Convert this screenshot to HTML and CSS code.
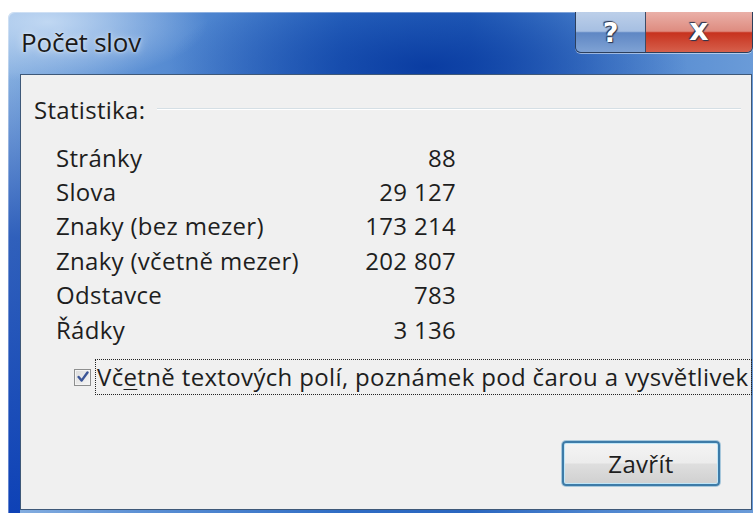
FILE: index.html
```html
<!DOCTYPE html>
<html lang="cs">
<head>
<meta charset="utf-8">
<title>Počet slov</title>
<link rel="stylesheet" href="styles.css">
</head>
<body>
<div class="window">
  <div class="titlebar">
    <div class="title">Počet slov</div>
    <div class="caption-buttons">
      <div class="cap-btn help"><span class="glyph">?</span></div>
      <div class="cap-btn close"><span class="glyph">x</span></div>
    </div>
  </div>
  <div class="client">
    <div class="group-head">
      <span class="group-label">Statistika:</span>
      <span class="group-rule"></span>
    </div>
    <div class="stats">
      <span class="label">Stránky</span><span class="value">88</span>
      <span class="label">Slova</span><span class="value">29 127</span>
      <span class="label">Znaky (bez mezer)</span><span class="value">173 214</span>
      <span class="label">Znaky (včetně mezer)</span><span class="value">202 807</span>
      <span class="label">Odstavce</span><span class="value">783</span>
      <span class="label">Řádky</span><span class="value">3 136</span>
    </div>
    <div class="check-row">
      <span class="checkbox">
        <svg viewBox="0 0 11 11" width="12" height="12"><path d="M1.5 5.5 L4.2 8.8 L9.6 1.4" fill="none" stroke="#3b5597" stroke-width="2.2" stroke-linecap="round" stroke-linejoin="round"/></svg>
      </span>
      <span class="check-label">Vč<u>e</u>tně textových polí, poznámek pod čarou a vysvětlivek</span>
    </div>
    <div class="actions">
      <button class="btn-default">Zavřít</button>
    </div>
  </div>
</div>
</body>
</html>
```
FILE: styles.css
```css
html, body {
  margin: 0;
  padding: 0;
  background: #ffffff;
}

body {
  width: 753px;
  height: 517px;
  overflow: hidden;
  font-family: "Open Sans", "Noto Sans", sans-serif;
}

/* Aero glass frame: light top-left, deep blue centre, darker left edge lower down */
.window {
  margin: 12px 0 0 8px;
  width: 745px;
  height: 501px;
  display: flex;
  flex-direction: column;
  border-radius: 6px 0 0 0;
  background:
    linear-gradient(180deg, rgba(20, 70, 175, 0) 12%, rgba(20, 70, 175, 0.75) 45%, rgba(8, 60, 180, 0.95) 100%) 0 0 / 12px 100% no-repeat,
    radial-gradient(ellipse 260px 90px at 420px 55px, rgba(8, 58, 160, 0.95), rgba(8, 58, 160, 0) 100%),
    radial-gradient(ellipse 160px 60px at 40px 10px, rgba(210, 228, 248, 0.8), rgba(210, 228, 248, 0) 100%),
    linear-gradient(90deg, #86afe0 0%, #5c90d4 18%, #2f6cc4 45%, #2a66bf 62%, #4f86cf 80%, #6a9bd8 100%);
  box-shadow: inset 1px 1px 0 rgba(255,255,255,0.35);
}

.titlebar {
  height: 62px;
  display: flex;
  justify-content: space-between;
  align-items: flex-start;
}

.title {
  margin: 12px 0 0 13px;
  font-size: 26px;
  color: #1a1a1a;
  letter-spacing: -0.2px;
  white-space: nowrap;
  text-shadow: 0 0 8px rgba(255,255,255,0.7), 0 0 3px rgba(255,255,255,0.6);
}

.caption-buttons {
  display: flex;
  height: 40px;
  border: 1px solid #2c3f5c;
  border-top: none;
  border-radius: 0 0 6px 6px;
  overflow: hidden;
  box-shadow: 0 1px 0 rgba(255,255,255,0.5);
}

.cap-btn {
  display: flex;
  align-items: center;
  justify-content: center;
  height: 40px;
}

.help {
  width: 69px;
  background: linear-gradient(180deg, #bccfe9 0%, #a6bfe2 48%, #5f87c4 52%, #7fa2d4 100%);
  border-right: 1px solid #3d4c66;
}

.close {
  width: 106px;
  background: linear-gradient(180deg, #eab0a8 0%, #de8c80 48%, #c7321e 52%, #d6604c 100%);
}

.glyph {
  font-family: "DejaVu Sans", sans-serif;
  font-weight: bold;
  font-size: 27px;
  color: #ffffff;
  line-height: 1;
  text-shadow: 0 0 1px #1e2a40, 1px 1px 1px #2a3550, -1px -1px 1px #2a3550;
}

.close .glyph {
  font-size: 30px;
  margin-top: -4px;
}

.client {
  flex: 1;
  margin: 0 1px 3px 12px;
  border: 1px solid #3e5878;
  background: #f0f0f0;
  display: flex;
  flex-direction: column;
  padding: 20px 0 0 13px;
  color: #1e1e1e;
  font-size: 24px;
  letter-spacing: 0.3px;
}

.group-head {
  display: flex;
  align-items: center;
  gap: 12px;
  height: 28px;
}

.group-rule {
  flex: 1;
  margin-right: 10px;
  height: 1px;
  background: #d5dfe5;
  border-bottom: 1px solid #ffffff;
}

.stats {
  display: grid;
  grid-template-columns: 250px 150px;
  grid-auto-rows: 34.4px;
  align-items: center;
  margin: 17px 0 0 22px;
}

.label {
  white-space: nowrap;
}

.value {
  text-align: right;
  white-space: nowrap;
}

.check-row {
  display: flex;
  align-items: center;
  gap: 5px;
  margin: 14px 0 0 40px;
}

.checkbox {
  width: 17px;
  height: 17px;
  box-sizing: border-box;
  border: 1px solid #8e8f8f;
  background: linear-gradient(135deg, #dcdcdc, #f6f6f6);
  display: flex;
  align-items: center;
  justify-content: center;
  box-shadow: inset 0 0 0 1px #f4f4f4;
}

.check-label {
  outline: 1px dotted #222;
  outline-offset: 0;
  line-height: 30px;
  padding: 2px 2px 2px 1px;
  letter-spacing: 0.35px;
  white-space: nowrap;
}

.check-label u {
  text-decoration-thickness: 1px;
  text-underline-offset: 3px;
}

.actions {
  display: flex;
  justify-content: flex-end;
  margin: 47px 31px 0 0;
}

.btn-default {
  width: 158px;
  height: 45px;
  font-family: inherit;
  font-size: 24px;
  letter-spacing: 0.3px;
  color: #1e1e1e;
  border: 2px solid #3d7ba8;
  border-radius: 4px;
  background: linear-gradient(180deg, #f4f4f4 0%, #ececec 48%, #dedede 52%, #d0d0d0 100%);
  box-shadow: inset 0 0 0 1px #bfe6f8, 0 0 0 1px #a8c8dc;
  padding: 0;
}
```
